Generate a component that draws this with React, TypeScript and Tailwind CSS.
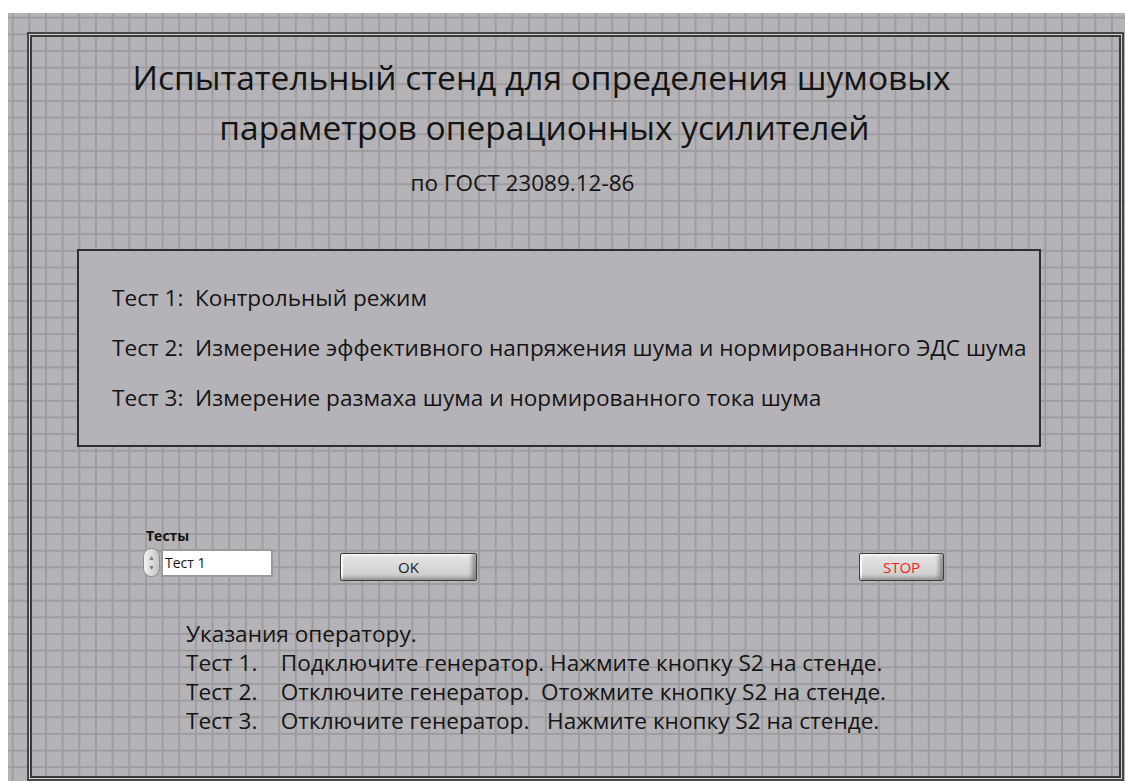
import React from 'react';

const tests = [
    'Тест 1:  Контрольный режим',
    'Тест 2:  Измерение эффективного напряжения шума и нормированного ЭДС шума',
    'Тест 3:  Измерение размаха шума и нормированного тока шума',
];

const hints = [
    'Указания оператору.',
    'Тест 1.    Подключите генератор. Нажмите кнопку S2 на стенде.',
    'Тест 2.    Отключите генератор.  Отожмите кнопку S2 на стенде.',
    'Тест 3.    Отключите генератор.   Нажмите кнопку S2 на стенде.',
];

function Spinner() {
    return (
        <div className="w-[17px] h-[29px] rounded-full border border-[#8c8c8c] bg-[linear-gradient(to_right,#f2f2f2,#c4c4c4)] flex flex-col items-center justify-center text-[7px] leading-[10px] text-[#7a7a7a]">
            <span>▲</span>
            <span>▼</span>
        </div>
    );
}

function PanelButton({ label, className }: { label: string; className: string }) {
    return (
        <button
            className={`h-[28px] rounded-[2px] border border-[#3e3e3e] bg-[linear-gradient(to_bottom,#e6e6e6,#cacaca)] shadow-[inset_-4px_-2px_4px_rgba(0,0,0,0.35),inset_2px_2px_1px_rgba(255,255,255,0.9)] text-[15px] leading-none ${className}`}
        >
            {label}
        </button>
    );
}

export default function App() {
    return (
        <div className="min-h-screen bg-white pt-[13px] pl-[8px] font-['Open_Sans',sans-serif] text-[#141414]">
            <div className="h-[768px] pt-[19px] pl-[19px] bg-[#b5b3b7] bg-[linear-gradient(to_right,#9d9c9f_1.5px,transparent_1.5px),linear-gradient(to_bottom,#9d9c9f_1.5px,transparent_1.5px)] bg-size-[16.667px_16.667px] bg-position-[3.7px_3.7px]">
                <div className="w-[1097px] h-[749px] border-2 border-[#464646] shadow-[inset_0_0_0_1px_#cfcfcf,inset_0_0_0_3px_#3a3a3a]">
                    {/* heading */}
                    <div className="mt-[18px] w-[1025px] text-center text-[33.5px] leading-[50px]">
                        <div>Испытательный стенд для определения шумовых</div>
                        <div className="pl-[6px]">параметров операционных усилителей</div>
                    </div>
                    <div className="mt-[16px] w-[987px] text-center text-[22.5px] leading-[30px]">
                        по ГОСТ 23089.12-86
                    </div>

                    {/* list of tests */}
                    <div className="mt-[51px] ml-[48px] w-[964px] h-[198px] border-2 border-[#2e2e2e] bg-[#b5b3b7] pt-[22px] pl-[33px] text-[22.6px] leading-[50px]">
                        {tests.map((t) => (
                            <div key={t} className="whitespace-pre">
                                {t}
                            </div>
                        ))}
                    </div>

                    {/* controls */}
                    <div className="mt-[81px] ml-[117px] text-[14px] leading-[16px] font-bold">Тесты</div>
                    <div className="mt-[4px] flex items-start">
                        <div className="ml-[114px] flex items-center">
                            <Spinner />
                            <div className="ml-[1px] w-[112px] h-[28px] border-2 border-[#9a9a9a] bg-white pl-[2px] text-[14px] leading-[24px]">
                                Тест 1
                            </div>
                        </div>
                        <PanelButton label="OK" className="ml-[67px] mt-[5px] w-[137px] text-[#1a1a1a] font-medium" />
                        <PanelButton label="STOP" className="ml-[382px] mt-[5px] w-[85px] text-[#ff1a1a]" />
                    </div>

                    {/* operator hints */}
                    <div className="mt-[38px] ml-[157px] text-[22.6px] leading-[29px]">
                        {hints.map((h) => (
                            <div key={h} className="whitespace-pre">
                                {h}
                            </div>
                        ))}
                    </div>
                </div>
            </div>
        </div>
    );
}
